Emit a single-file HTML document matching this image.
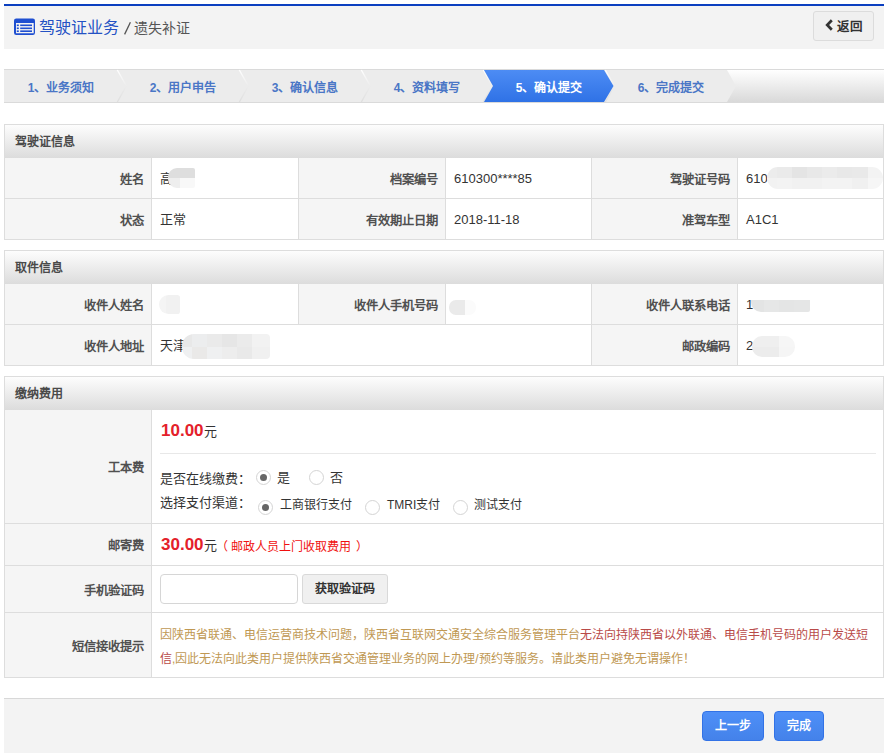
<!DOCTYPE html>
<html lang="zh-CN">
<head>
<meta charset="utf-8">
<style>
*{margin:0;padding:0;box-sizing:border-box}
html,body{width:887px;height:756px;background:#fff;overflow:hidden}
body{font-family:"Liberation Sans",sans-serif;font-size:13px;color:#333;position:relative}
.abs{position:absolute;white-space:nowrap}
.ph{font-weight:bold;font-size:12px;color:#4a4a4a}
.lab{text-align:right;font-weight:bold;font-size:12.3px;color:#505050}
.val{color:#333}
.stp{top:72px;width:100px;height:32px;line-height:32px;text-align:center;font-weight:bold;font-size:12px}
.blur{position:absolute;filter:blur(1.5px)}
.btn{position:absolute;top:711px;height:30px;background:linear-gradient(#4e8ff8,#4482ea);border:1px solid #3272e6;border-radius:4px;color:#fff;font-weight:bold;text-align:center;line-height:29px;font-size:12px}
</style>
</head>
<body>
<div class="abs" style="left:4px;top:4px;width:880px;height:2px;background:#0b3fc0"></div>
<div class="abs" style="left:4px;top:6px;width:880px;height:43px;background:#f3f3f3"></div>
<svg class="abs" style="left:14px;top:18px" width="22" height="18" viewBox="0 0 22 18">
  <path fill-rule="evenodd" fill="#1f4fd1" d="M2.2 0.5 H18.8 Q21 0.5 21 2.7 V14.8 Q21 17 18.8 17 H2.2 Q0 17 0 14.8 V2.7 Q0 0.5 2.2 0.5 Z M2 4.9 V15.3 H19.7 V4.9 Z"/>
  <rect x="2.8" y="6.5" width="2" height="1.6" fill="#1f4fd1"/>
  <rect x="2.8" y="9.5" width="2" height="1.6" fill="#1f4fd1"/>
  <rect x="2.8" y="12.4" width="2" height="1.6" fill="#1f4fd1"/>
  <rect x="6.2" y="6.5" width="11.8" height="1.6" fill="#1f4fd1"/>
  <rect x="6.2" y="9.5" width="11.8" height="1.6" fill="#1f4fd1"/>
  <rect x="6.2" y="12.4" width="11.8" height="1.6" fill="#1f4fd1"/>
</svg>
<div class="abs" style="left:39px;top:17px;font-size:16px;line-height:22px;color:#2452c4">驾驶证业务</div>
<svg class="abs" style="left:120px;top:18px" width="14" height="20" viewBox="0 0 14 20"><path d="M4.6 16.4 L10.4 4.2" stroke="#555" stroke-width="1.3"/></svg>
<div class="abs" style="left:134px;top:17px;font-size:14px;line-height:22px;color:#555">遗失补证</div>
<div class="abs" style="left:813px;top:11px;width:61px;height:30px;border:1px solid #dcdcdc;border-radius:3px;background:#f0f0f0"></div>
<svg class="abs" style="left:825px;top:19px" width="8" height="12" viewBox="0 0 8 12"><path d="M6.8 1.2 L2.2 6 L6.8 10.8" fill="none" stroke="#333" stroke-width="2.7"/></svg>
<div class="abs" style="left:837px;top:17.5px;font-size:12.5px;font-weight:bold;line-height:18px;color:#333">返回</div>
<svg class="abs" style="left:0;top:0" width="887" height="110" viewBox="0 0 887 110">
<defs><linearGradient id="sg" x1="0" y1="0" x2="0" y2="1"><stop offset="0" stop-color="#ffffff"/><stop offset="1" stop-color="#d9d9d9"/></linearGradient>
<linearGradient id="bg" x1="0" y1="0" x2="0" y2="1"><stop offset="0" stop-color="#4d8cf4"/><stop offset="1" stop-color="#2f72e6"/></linearGradient>
<linearGradient id="wl" gradientUnits="userSpaceOnUse" x1="0" y1="70" x2="0" y2="86"><stop offset="0" stop-color="#ffffff"/><stop offset="1" stop-color="#ececec"/></linearGradient>
<linearGradient id="gl" gradientUnits="userSpaceOnUse" x1="0" y1="86" x2="0" y2="102"><stop offset="0" stop-color="#ececec"/><stop offset="1" stop-color="#dedede"/></linearGradient></defs>
<rect x="4" y="69" width="880" height="34" fill="#dadada"/>
<rect x="4" y="70" width="880" height="32" fill="url(#sg)"/>
<path d="M4 70 H727 L736 86 L727 102 H4 Z" fill="#ececec"/>
<path d="M117.3 70 L126.3 86" stroke="url(#wl)" stroke-width="1.4"/>
<path d="M126.3 86 L117.3 102" stroke="url(#gl)" stroke-width="1.4"/>
<path d="M239.3 70 L248.3 86" stroke="url(#wl)" stroke-width="1.4"/>
<path d="M248.3 86 L239.3 102" stroke="url(#gl)" stroke-width="1.4"/>
<path d="M361.3 70 L370.3 86" stroke="url(#wl)" stroke-width="1.4"/>
<path d="M370.3 86 L361.3 102" stroke="url(#gl)" stroke-width="1.4"/>
<path d="M483.3 70 L492.3 86" stroke="url(#wl)" stroke-width="1.4"/>
<path d="M492.3 86 L483.3 102" stroke="url(#gl)" stroke-width="1.4"/>
<path d="M605.3 70 L614.3 86" stroke="url(#wl)" stroke-width="1.4"/>
<path d="M614.3 86 L605.3 102" stroke="url(#gl)" stroke-width="1.4"/>
<path d="M484 70 H604 L613.5 86 L604 102 H484 L493 86 Z" fill="url(#bg)"/>
</svg>
<div class="abs stp" style="left:11px;color:#4a76c6">1、业务须知</div>
<div class="abs stp" style="left:133px;color:#4a76c6">2、用户申告</div>
<div class="abs stp" style="left:255px;color:#4a76c6">3、确认信息</div>
<div class="abs stp" style="left:377px;color:#4a76c6">4、资料填写</div>
<div class="abs stp" style="left:499px;color:#fff">5、确认提交</div>
<div class="abs stp" style="left:621px;color:#4a76c6">6、完成提交</div>
<div class="abs" style="left:4px;top:124px;width:880px;height:116px;border:1px solid #dddddd;background:#fff"></div>
<div class="abs" style="left:5px;top:125px;width:878px;height:33px;background:linear-gradient(#fdfdfd,#dcdcdc)"></div>
<div class="abs ph" style="left:15px;top:126px;height:33px;line-height:33px">驾驶证信息</div>
<div class="abs" style="left:5px;top:198px;width:878px;height:1px;background:#dddddd"></div>
<div class="abs" style="left:151px;top:158px;width:1px;height:81px;background:#dddddd"></div>
<div class="abs" style="left:298px;top:158px;width:1px;height:81px;background:#dddddd"></div>
<div class="abs" style="left:445px;top:158px;width:1px;height:81px;background:#dddddd"></div>
<div class="abs" style="left:591px;top:158px;width:1px;height:81px;background:#dddddd"></div>
<div class="abs" style="left:737px;top:158px;width:1px;height:81px;background:#dddddd"></div>
<div class="abs" style="left:5px;top:158px;width:146px;height:40px;background:#f5f5f5"></div>
<div class="abs lab" style="left:5px;top:160px;width:139px;height:40px;line-height:40px">姓名</div>
<div class="abs val" style="left:160px;top:159px;height:40px;line-height:40px;">高</div>
<div class="abs" style="left:299px;top:158px;width:146px;height:40px;background:#f5f5f5"></div>
<div class="abs lab" style="left:299px;top:160px;width:139px;height:40px;line-height:40px">档案编号</div>
<div class="abs val" style="left:454px;top:159px;height:40px;line-height:40px;">610300****85</div>
<div class="abs" style="left:592px;top:158px;width:145px;height:40px;background:#f5f5f5"></div>
<div class="abs lab" style="left:592px;top:160px;width:138px;height:40px;line-height:40px">驾驶证号码</div>
<div class="abs val" style="left:746px;top:159px;height:40px;line-height:40px;">610</div>
<div class="abs" style="left:5px;top:199px;width:146px;height:40px;background:#f5f5f5"></div>
<div class="abs lab" style="left:5px;top:201px;width:139px;height:40px;line-height:40px">状态</div>
<div class="abs val" style="left:160px;top:200px;height:40px;line-height:40px;">正常</div>
<div class="abs" style="left:299px;top:199px;width:146px;height:40px;background:#f5f5f5"></div>
<div class="abs lab" style="left:299px;top:201px;width:139px;height:40px;line-height:40px">有效期止日期</div>
<div class="abs val" style="left:454px;top:200px;height:40px;line-height:40px;">2018-11-18</div>
<div class="abs" style="left:592px;top:199px;width:145px;height:40px;background:#f5f5f5"></div>
<div class="abs lab" style="left:592px;top:201px;width:138px;height:40px;line-height:40px">准驾车型</div>
<div class="abs val" style="left:746px;top:200px;height:40px;line-height:40px;">A1C1</div>
<div class="abs" style="left:168px;top:168px;width:27px;height:20px;border-radius:9px 2px 2px 9px;overflow:hidden;filter:blur(0.6px)"><div style="position:absolute;left:0px;top:0;width:12px;height:10.0px;background:#dedede"></div><div style="position:absolute;left:0px;top:10.0px;width:12px;height:10.0px;background:#eeeeee"></div><div style="position:absolute;left:12px;top:0;width:15px;height:10.0px;background:#dedede"></div><div style="position:absolute;left:12px;top:10.0px;width:15px;height:10.0px;background:#f8f8f8"></div></div>
<div class="abs" style="left:767px;top:167px;width:116px;height:22px;border-radius:11px;overflow:hidden;filter:blur(0.6px)"><div style="position:absolute;left:0px;top:0;width:10px;height:11.0px;background:#ececec"></div><div style="position:absolute;left:0px;top:11.0px;width:10px;height:11.0px;background:#f2f2f2"></div><div style="position:absolute;left:10px;top:0;width:15px;height:11.0px;background:#eaeaea"></div><div style="position:absolute;left:10px;top:11.0px;width:15px;height:11.0px;background:#f3f3f3"></div><div style="position:absolute;left:25px;top:0;width:15px;height:11.0px;background:#e4e4e4"></div><div style="position:absolute;left:25px;top:11.0px;width:15px;height:11.0px;background:#f1f1f1"></div><div style="position:absolute;left:40px;top:0;width:15px;height:11.0px;background:#e8e8e8"></div><div style="position:absolute;left:40px;top:11.0px;width:15px;height:11.0px;background:#f1f1f1"></div><div style="position:absolute;left:55px;top:0;width:15px;height:11.0px;background:#ebebeb"></div><div style="position:absolute;left:55px;top:11.0px;width:15px;height:11.0px;background:#f3f3f3"></div><div style="position:absolute;left:70px;top:0;width:15px;height:11.0px;background:#e8e8e8"></div><div style="position:absolute;left:70px;top:11.0px;width:15px;height:11.0px;background:#f3f3f3"></div><div style="position:absolute;left:85px;top:0;width:16px;height:11.0px;background:#e9e9e9"></div><div style="position:absolute;left:85px;top:11.0px;width:16px;height:11.0px;background:#f0f0f0"></div><div style="position:absolute;left:101px;top:0;width:15px;height:11.0px;background:#f3f3f3"></div><div style="position:absolute;left:101px;top:11.0px;width:15px;height:11.0px;background:#f6f6f6"></div></div>
<div class="abs" style="left:4px;top:250px;width:880px;height:116px;border:1px solid #dddddd;background:#fff"></div>
<div class="abs" style="left:5px;top:251px;width:878px;height:33px;background:linear-gradient(#fdfdfd,#dcdcdc)"></div>
<div class="abs ph" style="left:15px;top:252px;height:33px;line-height:33px">取件信息</div>
<div class="abs" style="left:5px;top:324px;width:878px;height:1px;background:#dddddd"></div>
<div class="abs" style="left:151px;top:284px;width:1px;height:40px;background:#dddddd"></div>
<div class="abs" style="left:298px;top:284px;width:1px;height:40px;background:#dddddd"></div>
<div class="abs" style="left:445px;top:284px;width:1px;height:40px;background:#dddddd"></div>
<div class="abs" style="left:591px;top:284px;width:1px;height:40px;background:#dddddd"></div>
<div class="abs" style="left:737px;top:284px;width:1px;height:40px;background:#dddddd"></div>
<div class="abs" style="left:151px;top:325px;width:1px;height:40px;background:#dddddd"></div>
<div class="abs" style="left:591px;top:325px;width:1px;height:40px;background:#dddddd"></div>
<div class="abs" style="left:737px;top:325px;width:1px;height:40px;background:#dddddd"></div>
<div class="abs" style="left:5px;top:284px;width:146px;height:40px;background:#f5f5f5"></div>
<div class="abs lab" style="left:5px;top:286px;width:139px;height:40px;line-height:40px">收件人姓名</div>
<div class="abs" style="left:299px;top:284px;width:146px;height:40px;background:#f5f5f5"></div>
<div class="abs lab" style="left:299px;top:286px;width:139px;height:40px;line-height:40px">收件人手机号码</div>
<div class="abs" style="left:592px;top:284px;width:145px;height:40px;background:#f5f5f5"></div>
<div class="abs lab" style="left:592px;top:286px;width:138px;height:40px;line-height:40px">收件人联系电话</div>
<div class="abs val" style="left:746px;top:285px;height:40px;line-height:40px;">1</div>
<div class="abs" style="left:5px;top:325px;width:146px;height:40px;background:#f5f5f5"></div>
<div class="abs lab" style="left:5px;top:327px;width:139px;height:40px;line-height:40px">收件人地址</div>
<div class="abs val" style="left:160px;top:326px;height:40px;line-height:40px;">天津</div>
<div class="abs" style="left:592px;top:325px;width:145px;height:40px;background:#f5f5f5"></div>
<div class="abs lab" style="left:592px;top:327px;width:138px;height:40px;line-height:40px">邮政编码</div>
<div class="abs val" style="left:746px;top:326px;height:40px;line-height:40px;">2</div>
<div class="abs" style="left:159px;top:295px;width:21px;height:19px;border-radius:10px 3px 3px 10px;overflow:hidden;filter:blur(0.6px)"><div style="position:absolute;left:0px;top:0;width:7px;height:9.5px;background:#f4f4f4"></div><div style="position:absolute;left:0px;top:9.5px;width:7px;height:9.5px;background:#f4f4f4"></div><div style="position:absolute;left:7px;top:0;width:14px;height:9.5px;background:#f1f1f1"></div><div style="position:absolute;left:7px;top:9.5px;width:14px;height:9.5px;background:#f1f1f1"></div></div>
<div class="abs" style="left:449px;top:300px;width:27px;height:15px;border-radius:7px;overflow:hidden;filter:blur(0.6px)"><div style="position:absolute;left:0px;top:0;width:16px;height:7.5px;background:#eaeaea"></div><div style="position:absolute;left:0px;top:7.5px;width:16px;height:7.5px;background:#eaeaea"></div><div style="position:absolute;left:16px;top:0;width:11px;height:7.5px;background:#fbfbfb"></div><div style="position:absolute;left:16px;top:7.5px;width:11px;height:7.5px;background:#fbfbfb"></div></div>
<div class="abs" style="left:751px;top:300px;width:59px;height:12px;border-radius:0 0 2px 10px;overflow:hidden;filter:blur(0.6px)"><div style="position:absolute;left:0px;top:0;width:13px;height:6.0px;background:#e3e4e4"></div><div style="position:absolute;left:0px;top:6.0px;width:13px;height:6.0px;background:#e3e4e4"></div><div style="position:absolute;left:13px;top:0;width:15px;height:6.0px;background:#e6e7e7"></div><div style="position:absolute;left:13px;top:6.0px;width:15px;height:6.0px;background:#e6e7e7"></div><div style="position:absolute;left:28px;top:0;width:15px;height:6.0px;background:#e4e5e5"></div><div style="position:absolute;left:28px;top:6.0px;width:15px;height:6.0px;background:#e4e5e5"></div><div style="position:absolute;left:43px;top:0;width:16px;height:6.0px;background:#e5e6e6"></div><div style="position:absolute;left:43px;top:6.0px;width:16px;height:6.0px;background:#e5e6e6"></div></div>
<div class="abs" style="left:182px;top:334px;width:88px;height:25px;border-radius:12px 4px 4px 12px;overflow:hidden;filter:blur(0.6px)"><div style="position:absolute;left:0px;top:0;width:10px;height:12.5px;background:#e8e8e8"></div><div style="position:absolute;left:0px;top:12.5px;width:10px;height:12.5px;background:#eff0f1"></div><div style="position:absolute;left:10px;top:0;width:15px;height:12.5px;background:#ecedee"></div><div style="position:absolute;left:10px;top:12.5px;width:15px;height:12.5px;background:#eae9e8"></div><div style="position:absolute;left:25px;top:0;width:15px;height:12.5px;background:#eaeaea"></div><div style="position:absolute;left:25px;top:12.5px;width:15px;height:12.5px;background:#eff0f1"></div><div style="position:absolute;left:40px;top:0;width:15px;height:12.5px;background:#e6e6e6"></div><div style="position:absolute;left:40px;top:12.5px;width:15px;height:12.5px;background:#ededed"></div><div style="position:absolute;left:55px;top:0;width:15px;height:12.5px;background:#ebebeb"></div><div style="position:absolute;left:55px;top:12.5px;width:15px;height:12.5px;background:#e9e9e9"></div><div style="position:absolute;left:70px;top:0;width:18px;height:12.5px;background:#f2f2f2"></div><div style="position:absolute;left:70px;top:12.5px;width:18px;height:12.5px;background:#f0f0f0"></div></div>
<div class="abs" style="left:752px;top:336px;width:43px;height:21px;border-radius:10px;overflow:hidden;filter:blur(0.6px)"><div style="position:absolute;left:0px;top:0;width:27px;height:10.5px;background:#efefef"></div><div style="position:absolute;left:0px;top:10.5px;width:27px;height:10.5px;background:#ececec"></div><div style="position:absolute;left:27px;top:0;width:16px;height:10.5px;background:#f6f6f6"></div><div style="position:absolute;left:27px;top:10.5px;width:16px;height:10.5px;background:#f5f5f5"></div></div>
<div class="abs" style="left:4px;top:376px;width:880px;height:302px;border:1px solid #dddddd;background:#fff"></div>
<div class="abs" style="left:5px;top:377px;width:878px;height:33px;background:linear-gradient(#fdfdfd,#dcdcdc)"></div>
<div class="abs ph" style="left:15px;top:378px;height:33px;line-height:33px">缴纳费用</div>
<div class="abs" style="left:151px;top:410px;width:1px;height:267px;background:#dddddd"></div>
<div class="abs" style="left:5px;top:523px;width:878px;height:1px;background:#dddddd"></div>
<div class="abs" style="left:5px;top:565px;width:878px;height:1px;background:#dddddd"></div>
<div class="abs" style="left:5px;top:612px;width:878px;height:1px;background:#dddddd"></div>
<div class="abs" style="left:5px;top:410px;width:146px;height:113px;background:#f5f5f5"></div>
<div class="abs lab" style="left:5px;top:412px;width:139px;height:113px;line-height:113px">工本费</div>
<div class="abs" style="left:5px;top:524px;width:146px;height:41px;background:#f5f5f5"></div>
<div class="abs lab" style="left:5px;top:526px;width:139px;height:41px;line-height:41px">邮寄费</div>
<div class="abs" style="left:5px;top:566px;width:146px;height:46px;background:#f5f5f5"></div>
<div class="abs lab" style="left:5px;top:568px;width:139px;height:46px;line-height:46px">手机验证码</div>
<div class="abs" style="left:5px;top:613px;width:146px;height:64px;background:#f5f5f5"></div>
<div class="abs lab" style="left:5px;top:615px;width:139px;height:64px;line-height:64px">短信接收提示</div>
<div class="abs" style="left:161px;top:421px;height:20px;line-height:20px;font-size:17px;font-weight:bold;color:#e4202a">10.00<span style="font-size:13px;font-weight:normal;color:#333">元</span></div>
<div class="abs" style="left:160px;top:453px;width:716px;height:1px;background:#e8e8e8"></div>
<div class="abs" style="left:160px;top:468.5px;height:20px;line-height:20px">是否在线缴费：</div>
<div class="abs" style="left:160px;top:492.5px;height:20px;line-height:20px">选择支付渠道：</div>
<div class="abs" style="left:256.0px;top:469.5px;width:15px;height:15px;border:1px solid #d4d4d4;border-radius:50%;background:#fff"></div>
<div class="abs" style="left:260.0px;top:473.5px;width:7px;height:7px;border-radius:50%;background:#666"></div>
<div class="abs" style="left:308.7px;top:469.5px;width:15px;height:15px;border:1px solid #d4d4d4;border-radius:50%;background:#fff"></div>
<div class="abs" style="left:277px;top:468px;height:20px;line-height:20px">是</div>
<div class="abs" style="left:330px;top:468px;height:20px;line-height:20px">否</div>
<div class="abs" style="left:257.8px;top:499.9px;width:15px;height:15px;border:1px solid #d4d4d4;border-radius:50%;background:#fff"></div>
<div class="abs" style="left:261.8px;top:503.9px;width:7px;height:7px;border-radius:50%;background:#666"></div>
<div class="abs" style="left:364.7px;top:499.9px;width:15px;height:15px;border:1px solid #d4d4d4;border-radius:50%;background:#fff"></div>
<div class="abs" style="left:452.7px;top:499.9px;width:15px;height:15px;border:1px solid #d4d4d4;border-radius:50%;background:#fff"></div>
<div class="abs" style="left:279.5px;top:494.5px;height:20px;line-height:20px;font-size:12px">工商银行支付</div>
<div class="abs" style="left:387px;top:494.5px;height:20px;line-height:20px;font-size:12px">TMRI支付</div>
<div class="abs" style="left:474px;top:494.5px;height:20px;line-height:20px;font-size:12px">测试支付</div>
<div class="abs" style="left:161px;top:535px;height:20px;line-height:20px;font-size:17px;font-weight:bold;color:#e4202a">30.00<span style="font-size:13px;font-weight:normal;color:#333">元</span></div>
<div class="abs" style="left:160px;top:574px;width:138px;height:30px;border:1px solid #d6d6d6;border-radius:4px;background:#fff"></div>
<div class="abs" style="left:302px;top:574px;width:86px;height:30px;border:1px solid #d9d9d9;border-radius:3px;background:#f0f0f0;text-align:center;line-height:28px;font-weight:bold;font-size:12px;color:#333">获取验证码</div>
<div class="abs" style="left:160px;top:623px;width:715px;line-height:24px;font-size:12px;white-space:normal;color:#c09853">因陕西省联通、电信运营商技术问题，陕西省互联网交通安全综合服务管理平台<span style="color:#b94a48">无法向持陕西省以外联通、电信手机号码的用户发送短信</span>,因此无法向此类用户提供陕西省交通管理业务的网上办理/预约等服务。请此类用户避免无谓操作！</div>
<div class="abs" style="left:231px;top:537px;height:20px;line-height:20px;font-size:12px;color:#f01010">邮政人员上门收取费用</div>
<div class="abs" style="left:216px;top:537px;height:20px;line-height:20px;font-size:12px;color:#f01010">（</div>
<div class="abs" style="left:355.5px;top:537px;height:20px;line-height:20px;font-size:12px;color:#f01010">）</div>
<div class="abs" style="left:4px;top:698px;width:880px;height:1px;background:#d8d8d8"></div>
<div class="abs" style="left:4px;top:699px;width:880px;height:54px;background:#f3f3f3"></div>
<div class="btn" style="left:702px;width:62px">上一步</div>
<div class="btn" style="left:774px;width:50px">完成</div>
</body>
</html>
